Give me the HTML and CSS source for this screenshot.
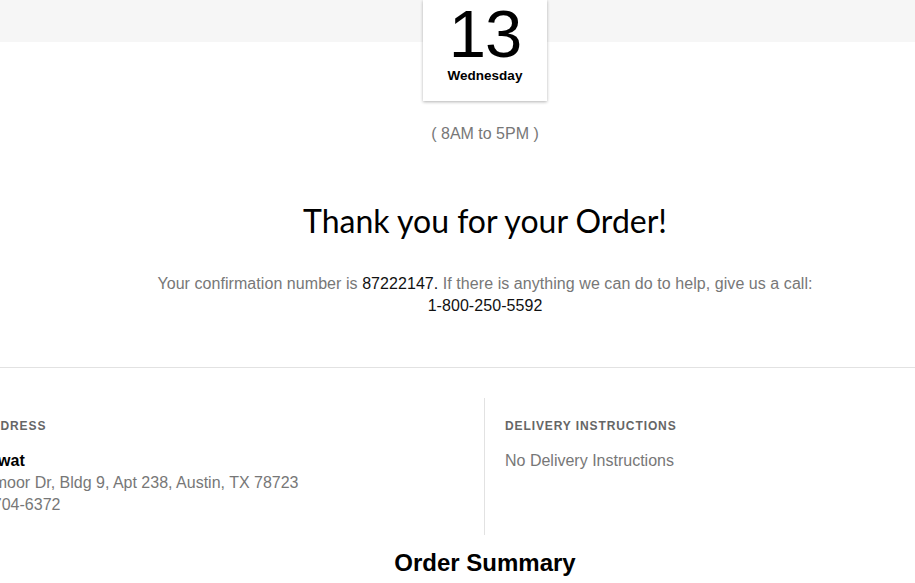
FILE: index.html
```html
<!DOCTYPE html>
<html>
<head>
<meta charset="utf-8">
<link rel="stylesheet" href="styles.css">
</head>
<body>
<div class="viewport">
  <div class="page">
    <header class="hero">
      <div class="date-card">
        <div class="day-num">13</div>
        <div class="day-name">Wednesday</div>
      </div>
      <div class="time-window">( 8AM to 5PM )</div>
    </header>
    <section class="thanks">
      <h1 class="thanks-title">Thank you for your Order!</h1>
      <p class="thanks-text">Your confirmation number is <span class="strong">87222147.</span> If there is anything we can do to help, give us a call:<br><span class="strong">1-800-250-5592</span></p>
    </section>
    <hr class="rule">
    <section class="details">
      <div class="detail-col">
        <div class="detail-label">DELIVERY ADDRESS</div>
        <div class="detail-body">
          <div class="name">Mohit Bhagwat</div>
          <div>16800 Braemoor Dr, Bldg 9, Apt 238, Austin, TX 78723</div>
          <div>Mob: (512) 704-6372</div>
        </div>
      </div>
      <div class="detail-col right">
        <div class="detail-label">DELIVERY INSTRUCTIONS</div>
        <div class="detail-body">No Delivery Instructions</div>
      </div>
    </section>
    <h2 class="summary-title">Order Summary</h2>
  </div>
</div>
</body>
</html>
```
FILE: styles.css
```css
html, body {
  margin: 0;
  padding: 0;
  background: #ffffff;
}
body {
  font-family: "Liberation Sans", Arial, sans-serif;
  color: #777777;
}
.viewport {
  width: 100%;
  overflow: hidden;
  height: 583px;
}
.page {
  width: 970px;
}
.hero {
  background: linear-gradient(#f6f6f6 0, #f6f6f6 42px, #ffffff 42px);
  margin-right: -200px;
  padding-right: 200px;
  display: flex;
  flex-direction: column;
  align-items: center;
}
.date-card {
  width: 124px;
  height: 101px;
  box-sizing: border-box;
  background: #ffffff;
  box-shadow: 0 1px 3px rgba(0, 0, 0, 0.3);
  display: flex;
  flex-direction: column;
  align-items: center;
  padding-top: 1px;
}
.day-num {
  font-size: 67px;
  line-height: 66px;
  color: #000000;
  letter-spacing: -1px;
}
.day-name {
  margin-top: 1px;
  font-size: 13.5px;
  line-height: 16px;
  font-weight: bold;
  color: #000000;
}
.time-window {
  margin-top: 23px;
  font-size: 16px;
  line-height: 20px;
  color: #777777;
}
.thanks {
  text-align: center;
}
.thanks-title {
  margin: 57px 0 0;
  font-family: "Lato", sans-serif;
  font-weight: 400;
  font-size: 32px;
  line-height: 40px;
  color: #000000;
}
.thanks-text {
  margin: 32px 0 0;
  font-size: 16px;
  line-height: 22px;
  letter-spacing: 0.06px;
  color: #777777;
}
.strong {
  color: #111111;
}
.rule {
  margin: 50px -200px 0 0;
  border: 0;
  border-top: 1px solid #e2e2e2;
  height: 0;
}
.details {
  margin-top: 30px;
  margin-left: -109px;
  width: 1186px;
  display: grid;
  grid-template-columns: 1fr 1fr;
}
.detail-col {
  padding: 20px 20px 19px 20px;
}
.detail-col.right {
  border-left: 1px solid #e2e2e2;
}
.detail-label {
  font-size: 12px;
  line-height: 16px;
  font-weight: bold;
  letter-spacing: 0.9px;
  color: #666666;
}
.detail-body {
  margin-top: 16px;
  font-size: 16px;
  line-height: 22px;
  color: #777777;
}
.name {
  font-weight: bold;
  color: #000000;
}
.summary-title {
  margin: 14px 0 0;
  text-align: center;
  font-size: 24px;
  line-height: 28px;
  font-weight: bold;
  color: #000000;
}
```
